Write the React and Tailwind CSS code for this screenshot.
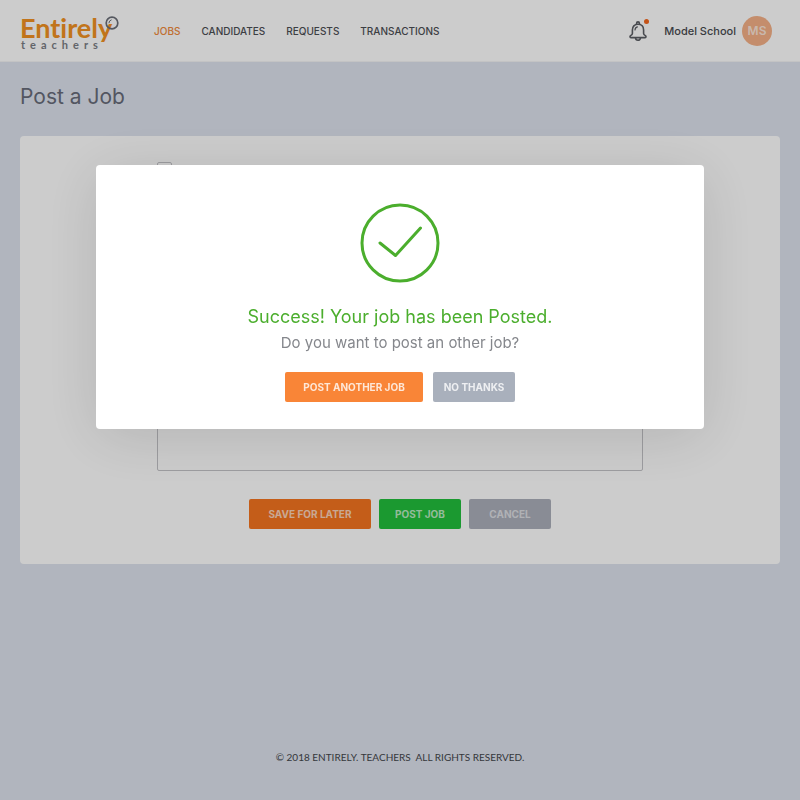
import React, { useState } from 'react';

const NAV = ['Jobs', 'Candidates', 'Requests', 'Transactions'];

function Logo() {
  return (
    <a href="#home" className="relative block w-[100px] h-9 pt-0.5" aria-label="Entirely teachers">
      <span className="block font-['Lato',sans-serif] font-bold text-[27px] leading-[26px] text-[#f29222] [font-variant-ligatures:none]">Entirely</span>
      <span className="block pl-px font-['Lato',sans-serif] font-bold text-[11px] leading-2 tracking-[5px] text-[#7b7e85]">teachers</span>
      <svg className="absolute right-0 top-0.5 size-4" viewBox="0 0 16 16" fill="none" stroke="#6b6f78">
        <circle cx="8" cy="8" r="5.8" strokeWidth="1.7" />
        <path d="M4.9 7.8a3.2 3.2 0 0 1 2.3-2.9" strokeWidth="1" strokeLinecap="round" />
      </svg>
    </a>
  );
}

function BellIcon() {
  return (
    <svg className="size-5" viewBox="0 0 20 20" fill="none" stroke="#5c5e64" strokeWidth="1.6" strokeLinecap="round" strokeLinejoin="round">
      <path d="M8.6 3V2.3a1.4 1.4 0 0 1 2.8 0V3" />
      <path d="M10 3.2c-3.6 0-5.6 2.5-5.6 5.8v3.4c0 1.2-.9 1.7-1.8 2.2-.8.5-.9 2 .3 2h14.2c1.2 0 1.1-1.500.300-2-.9-.5-1.800-1-1.800-2.200V9c0-3.300-2-5.800-5.600-5.800Z" />
      <path d="M7.600 17a2.400 2.200 0 0 0 4.800 0" />
      <path d="M7 9c0-1.700.9-2.800 2.400-3.200" strokeWidth="1.2" />
    </svg>
  );
}

function Button({ className, ...props }) {
  return (
    <button
      type="button"
      className={`h-[30px] rounded-xs text-[10px] leading-4 font-bold whitespace-nowrap ${className}`}
      {...props}
    />
  );
}

function SuccessModal({ onClose }) {
  return (
    <div className="fixed inset-0 z-50 flex items-start justify-center bg-black/20 pt-[165px]">
      <div
        role="dialog"
        aria-modal="true"
        aria-labelledby="success-title"
        className="w-[76%] rounded-sm bg-white pt-[38px] pb-[27px] text-center shadow-[0_8px_60px_rgba(0,0,0,0.12)]"
      >
        <svg className="mx-auto size-20" viewBox="0 0 80 80" fill="none" stroke="#4bae2d" strokeWidth="3" strokeLinecap="round" strokeLinejoin="round">
          <circle cx="40" cy="40" r="38" />
          <path d="M20 40 35.5 52.5 60.5 25" />
        </svg>
        <h2 id="success-title" className="mt-5 text-[18px] leading-7 text-[#4bae2d]">
          Success! Your job has been Posted.
        </h2>
        <p className="text-[15px] leading-6 text-[#85878c]">Do you want to post an other job?</p>
        <div className="mt-[17px] flex justify-center gap-2.5">
          <Button className="w-[138px] bg-[#f98537] text-white/80" onClick={onClose}>POST ANOTHER JOB</Button>
          <Button className="w-[82px] bg-[#a9b0bc] text-white/80" onClick={onClose}>NO THANKS</Button>
        </div>
      </div>
    </div>
  );
}

export default function App() {
  const [posted, setPosted] = useState(true);

  return (
    <div className="flex min-h-screen flex-col bg-[#dee3ee] font-['Inter',sans-serif]">
      <header className="flex h-[62px] items-center bg-white pl-5 pr-7 border-b border-[#f4f4f6]">
        <Logo />
        <nav className="ml-[34px] flex gap-[21px] text-[10px] leading-4 font-medium uppercase">
          {NAV.map((item, i) => (
            <a key={item} href={`#${item.toLowerCase()}`} className={i === 0 ? 'text-[#f08a3c]' : 'text-[#4c4e54]'}>
              {item}
            </a>
          ))}
        </nav>
        <div className="ml-auto flex items-center">
          <button type="button" aria-label="Notifications" className="relative mr-4">
            <BellIcon />
            <span className="absolute -top-0.5 -right-px size-[5px] rounded-full bg-[#f5671d]" />
          </button>
          <span className="text-[11px] leading-4 font-medium text-[#484a50]">Model School</span>
          <span className="ml-1.5 flex size-[30px] items-center justify-center rounded-full bg-[#f5b187] text-[12px] font-semibold text-white/70">
            MS
          </span>
        </div>
      </header>

      <main className="px-5">
        <h1 className="mt-[21px] text-[21px] leading-7 text-[#686c7a]">Post a Job</h1>
        <section className="mt-[25px] rounded-sm bg-white pt-[26px] pb-[35px]">
          <form className="mx-auto w-[64%]" onSubmit={(e) => e.preventDefault()}>
            <input type="checkbox" aria-label="Urgent" className="block size-[15px] appearance-none rounded-xs border border-[#c4c4c8]" />
            <textarea aria-label="Description" className="mt-[94px] block h-[200px] w-full resize-none rounded-xs border border-[#c4c4c8]" />
            <div className="mt-7 flex justify-center gap-2">
              <Button className="w-[122px] bg-[#f57520] text-white/70">SAVE FOR LATER</Button>
              <Button className="w-[82px] bg-[#22c03d] text-white/70" onClick={() => setPosted(true)}>POST JOB</Button>
              <Button className="w-[82px] bg-[#acafbb] text-white/60">CANCEL</Button>
            </div>
          </form>
        </section>
      </main>

      <footer className="mt-auto pb-[35px] text-center font-['Lato',sans-serif] text-[10px] leading-4 whitespace-pre text-[#44464c]">
        {'© 2018 ENTIRELY. TEACHERS  ALL RIGHTS RESERVED.'}
      </footer>

      {posted && <SuccessModal onClose={() => setPosted(false)} />}
    </div>
  );
}
